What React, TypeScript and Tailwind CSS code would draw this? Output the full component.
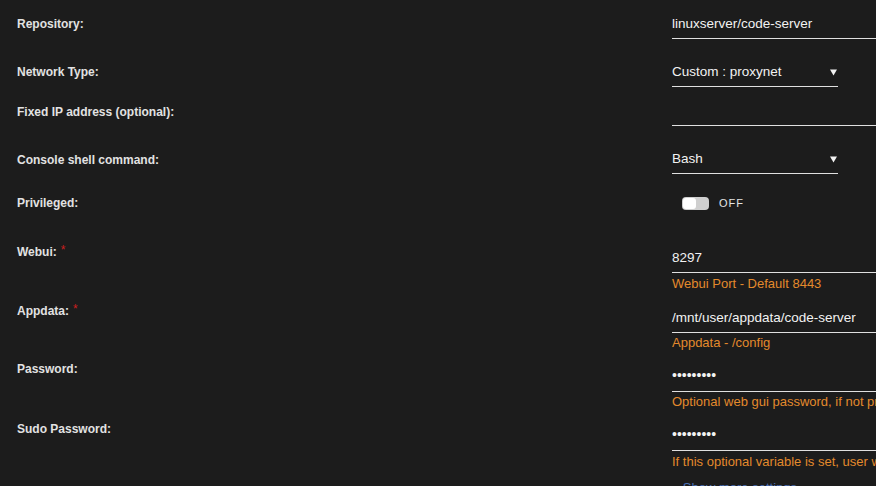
import React from 'react';

const font = { fontFamily: '"Liberation Sans", Arial, sans-serif' };

function Label({ text, required, className }: { text: string; required?: boolean; className: string }) {
  return (
    <div className={`w-[672px] shrink-0 pl-[17px] text-[12px] leading-[16px] font-bold text-[#e2e2e2] ${className}`}>
      {text}
      {required && <span className="ml-[4px] text-[12px] leading-none align-[2px] text-[#cc1f1f] font-normal">*</span>}
    </div>
  );
}

function TextValue({ value }: { value?: string }) {
  return (
    <div className="h-[23px] pb-[6px] border-b border-[#e0e0e0] text-[13.5px] leading-[16px] text-[#f2f2f2] whitespace-nowrap">
      {value}
    </div>
  );
}

function SecretValue() {
  return (
    <div className="h-[25px] pb-[8px] border-b border-[#e0e0e0] text-[14px] leading-[16px] text-[#f2f2f2] whitespace-nowrap">
      •••••••••
    </div>
  );
}

function SelectValue({ value }: { value: string }) {
  return (
    <div className="w-[166px] h-[23px] pb-[6px] border-b border-[#e0e0e0] flex items-start justify-between text-[13.5px] leading-[16px] text-[#f2f2f2]">
      <span>{value}</span>
      <svg width="7" height="7" viewBox="0 0 7 7" className="mt-[5px] mr-[1px]">
        <path d="M0 0.5h7L3.5 6.5z" fill="#f2f2f2" />
      </svg>
    </div>
  );
}

function Help({ text, className }: { text: string; className: string }) {
  return <div className={`text-[13px] leading-[16px] text-[#e38a2c] whitespace-nowrap ${className}`}>{text}</div>;
}

export default function App() {
  return (
    <div className="w-full h-[486px] overflow-hidden bg-[#1c1c1c]" style={font}>
      <div className="flex h-[48px]">
        <Label text="Repository:" className="pt-[16px]" />
        <div className="flex-1 min-w-0 pt-[16px]">
          <TextValue value="linuxserver/code-server" />
        </div>
      </div>

      <div className="flex h-[48px]">
        <Label text="Network Type:" className="pt-[16px]" />
        <div className="flex-1 min-w-0 pt-[16px]">
          <SelectValue value="Custom : proxynet" />
        </div>
      </div>

      <div className="flex h-[40px]">
        <Label text="Fixed IP address (optional):" className="pt-[8px]" />
        <div className="flex-1 min-w-0 pt-[7px]">
          <TextValue />
        </div>
      </div>

      <div className="flex h-[48px]">
        <Label text="Console shell command:" className="pt-[16px]" />
        <div className="flex-1 min-w-0 pt-[15px]">
          <SelectValue value="Bash" />
        </div>
      </div>

      <div className="flex h-[44px]">
        <Label text="Privileged:" className="pt-[11px]" />
        <div className="flex-1 min-w-0 pt-[12px] pl-[10px] flex items-start gap-[10px]">
          <div className="mt-[1px] w-[27px] h-[13px] rounded-[4px] bg-[#cfcfcf] flex items-center p-[1px]">
            <div className="w-[13px] h-[11px] rounded-[3px] bg-white" />
          </div>
          <span className="text-[11px] leading-[15px] tracking-[1px] text-[#e4e4e4]">OFF</span>
        </div>
      </div>

      <div className="flex h-[68px]">
        <Label text="Webui:" required className="pt-[16px]" />
        <div className="flex-1 min-w-0 pt-[22px]">
          <TextValue value="8297" />
          <Help text="Webui Port - Default 8443" className="mt-[3px]" />
        </div>
      </div>

      <div className="flex h-[60px]">
        <Label text="Appdata:" required className="pt-[7px]" />
        <div className="flex-1 min-w-0 pt-[14px]">
          <TextValue value="/mnt/user/appdata/code-server" />
          <Help text="Appdata - /config" className="mt-[2px]" />
        </div>
      </div>

      <div className="flex h-[58px]">
        <Label text="Password:" className="pt-[5px]" />
        <div className="flex-1 min-w-0 pt-[11px]">
          <SecretValue />
          <Help text="Optional web gui password, if not provided, webgui will be accessible without a password." className="mt-[2px]" />
        </div>
      </div>

      <div className="flex h-[60px]">
        <Label text="Sudo Password:" className="pt-[7px]" />
        <div className="flex-1 min-w-0 pt-[12px]">
          <SecretValue />
          <Help text="If this optional variable is set, user will have sudo access in the code-server terminal with the specified password." className="mt-[3px]" />
        </div>
      </div>

      <div className="flex">
        <div className="w-[672px] shrink-0" />
        <div className="pt-[6px] text-[13px] leading-[16px] text-[#4a6fb5] whitespace-nowrap">» Show more settings ...</div>
      </div>
    </div>
  );
}
